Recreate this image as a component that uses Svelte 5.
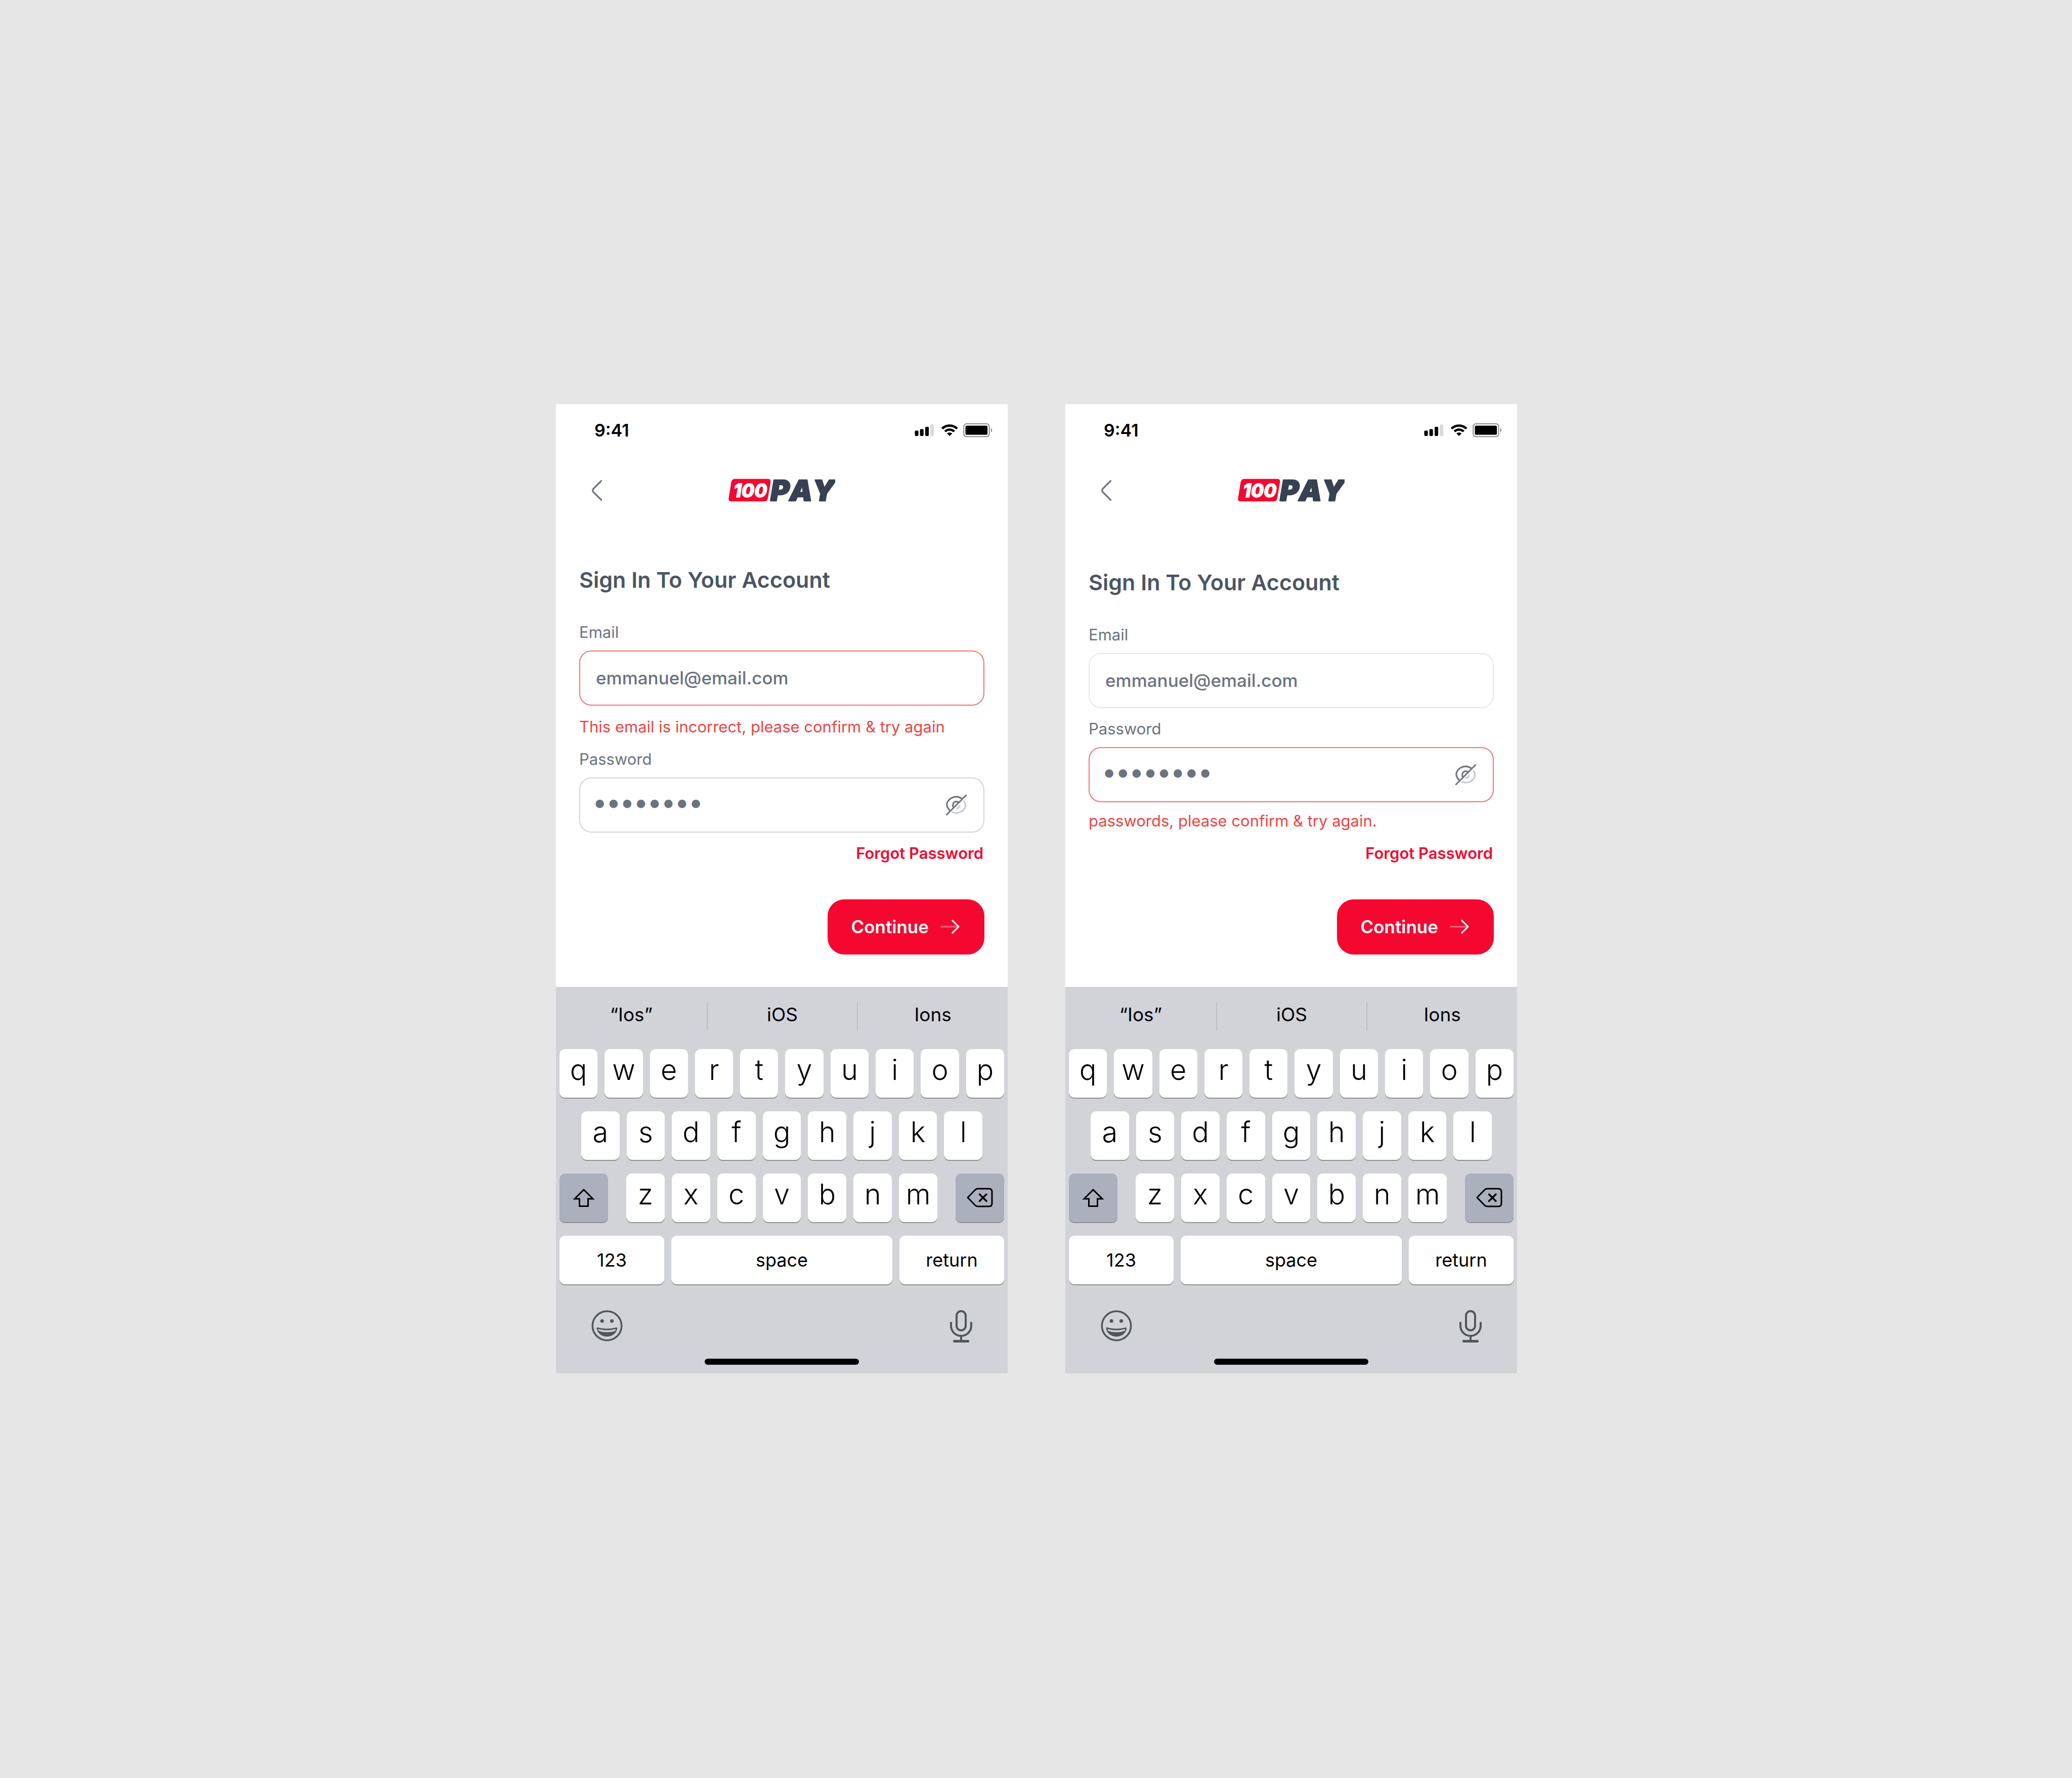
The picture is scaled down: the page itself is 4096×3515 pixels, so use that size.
<script>
  const screens = [
    {
      id: 'email-error',
      emailState: 'error',
      emailError: 'This email is incorrect, please confirm & try again',
      passwordState: 'normal',
      passwordError: ''
    },
    {
      id: 'password-error',
      emailState: 'muted',
      emailError: '',
      passwordState: 'error',
      passwordError: 'passwords, please confirm & try again.'
    }
  ];
  const suggestions = ['“Ios”', 'iOS', 'Ions'];
  const top = [...'qwertyuiop'];
  const middle = [...'asdfghjkl'];
  const bottom = [...'zxcvbnm'];
</script>

<main class="stage">
  {#each screens as screen (screen.id)}
    <section class="phone">
      <div class="status">
        <time>9:41</time>
        <svg class="status-icons" viewBox="94 69 608 114" aria-hidden="true">
          <rect x="96" y="129" width="28" height="42" rx="8" />
          <rect x="136" y="117" width="28" height="54" rx="8" />
          <rect x="177" y="99" width="28" height="72" rx="8" />
          <rect x="217" y="81" width="28" height="90" rx="8" fill="#dadada" />
          <path d="M303 107Q330 81 367 81T432 107L420 120Q396 99 367 99T315 120Z" />
          <path d="M325 130Q343 112 367 112T410 130L397 142Q384 130 367 130T338 142Z" />
          <path d="M347 152Q356 144 367 144T388 152L367 171Z" />
          <rect x="478" y="76" width="199" height="100" rx="22" fill="none" stroke="#8a8a8e" stroke-width="8" />
          <rect x="491" y="90" width="172" height="72" rx="10" />
          <path d="M690 108Q699 112 699 126T690 144Z" fill="#8a8a8e" />
        </svg>
      </div>

      <header class="header">
        <button class="back" aria-label="Back">
          <svg viewBox="0 0 24 24" aria-hidden="true">
            <path d="M15 19.92L8.48 13.4c-.77-.77-.77-2.03 0-2.8L15 4.08" fill="none" stroke="#6b7280" stroke-width="1.4" stroke-linecap="round" />
          </svg>
        </button>
        <svg class="logo" viewBox="116 22 836 301" role="img" aria-label="100PAY">
          <path d="M166 84H424Q450 84 446 110L425 235Q420 261 395 261H138Q114 261 118 235L138 110Q143 84 166 84Z" fill="#f5082f" />
          <text class="logo-num" x="156" y="228">100</text>
          <text class="logo-name" x="446" y="255">PAY</text>
        </svg>
      </header>

      <form class="form" class:compact={screen.passwordError} onsubmit={(e) => e.preventDefault()}>
        <h1>Sign In To Your Account</h1>

        <label for="{screen.id}-email">Email</label>
        <div class="control {screen.emailState}">
          <input id="{screen.id}-email" type="email" value="emmanuel@email.com" />
        </div>
        {#if screen.emailError}<p class="error-text">{screen.emailError}</p>{/if}

        <label class="next" for="{screen.id}-password">Password</label>
        <div class="control {screen.passwordState}">
          <input id="{screen.id}-password" class="secret" type="password" value="password" />
          <button class="eye" type="button" aria-label="Show password">
            <svg viewBox="75 86 170 170" fill="none" stroke="#6b7280" stroke-width="12" stroke-linecap="round" aria-hidden="true">
              <path d="M205 122C165 92 112 108 91 147C80 168 87 189 108 213" />
              <path d="M178 151C161 136 135 146 133 171C132 180 134 184 138 189" />
              <path d="M236 95L84 247" />
              <g stroke="#c4c7cd">
                <path d="M219 140C233 158 236 174 227 193C210 226 170 242 131 228" />
                <path d="M186 176Q182 194 164 198" />
              </g>
            </svg>
          </button>
        </div>
        {#if screen.passwordError}<p class="error-text">{screen.passwordError}</p>{/if}

        <a class="forgot" class:after-error={screen.passwordError} href="#forgot">Forgot Password</a>

        <button class="continue" type="submit">
          <span>Continue</span>
          <svg viewBox="0 0 24 24" fill="none" stroke="#fff" stroke-width="1.5" stroke-linecap="round" stroke-linejoin="round" aria-hidden="true">
            <path d="M3.5 12h16.83" opacity=".4" />
            <path d="M14.43 5.93L20.5 12l-6.07 6.07" />
          </svg>
        </button>
      </form>

      <div class="keyboard">
        <div class="suggestions">
          {#each suggestions as word}<button>{word}</button>{/each}
        </div>
        <div class="keys">
          <div class="row">
            {#each top as k}<button class="key">{k}</button>{/each}
          </div>
          <div class="row inset">
            {#each middle as k}<button class="key">{k}</button>{/each}
          </div>
          <div class="row split">
            <button class="key special" aria-label="Shift">
              <svg width="44" height="38" viewBox="0 0 44 38" aria-hidden="true">
                <path d="M22 3L40 21H30.500V35.500H13.500V21H4Z" fill="none" stroke="#000" stroke-width="3" />
              </svg>
            </button>
            <div class="row letters">
              {#each bottom as k}<button class="key">{k}</button>{/each}
            </div>
            <button class="key special" aria-label="Delete">
              <svg width="52" height="39" viewBox="0 0 52 39" fill="none" stroke="#000" stroke-width="3" stroke-linecap="round" stroke-linejoin="round" aria-hidden="true">
                <path d="M2 19.500L17 4Q19 2 22 2H44Q50 2 50 8V31Q50 37 44 37H22Q19 37 17 35Z" />
                <path d="M25.500 13L39 26.500M39 13L25.500 26.500" stroke-width="3.500" />
              </svg>
            </button>
          </div>
          <div class="row actions">
            <button class="key word">123</button>
            <button class="key word">space</button>
            <button class="key word">return</button>
          </div>
        </div>
        <div class="tools">
          <button aria-label="Emoji">
            <svg width="62" height="62" viewBox="125 100 246 246" fill="#50565b" aria-hidden="true">
              <circle cx="248" cy="223" r="114" fill="none" stroke="#50565b" stroke-width="14" />
              <circle cx="209" cy="185" r="14" />
              <circle cx="286" cy="185" r="14" />
              <path fill-rule="evenodd" d="M167 244C165 235 172 234 180 237C220 249 275 249 316 237C324 234 330 236 328 245C322 282 290 308 248 308S173 282 167 244ZM182 249C220 261 275 261 312 249C317 248 317 256 313 262C285 277 210 277 183 262C178 255 178 248 182 249Z" />
            </svg>
          </button>
          <button aria-label="Dictate">
            <svg width="44" height="64" viewBox="0 0 44 64" fill="none" stroke="#50565b" stroke-width="4" stroke-linecap="round" aria-hidden="true">
              <rect x="13" y="2" width="18" height="38" rx="9" />
              <path d="M2 25V31A20 20 0 0 0 42 31V25M22 52V60" />
              <rect x="6" y="59" width="32" height="5" rx="2" fill="#50565b" stroke="none" />
            </svg>
          </button>
        </div>
        <div class="home"></div>
      </div>
    </section>
  {/each}
</main>

<style>
  :global(body) {
    margin: 0;
    background: #e6e6e6;
  }
  .stage {
    box-sizing: border-box;
    min-height: 100vh;
    padding: 0 0 2px 2px;
    display: flex;
    justify-content: center;
    align-content: center;
    flex-wrap: wrap;
    gap: 114px;
    font-family: Inter, 'Liberation Sans', sans-serif;
  }
  button {
    border: 0;
    padding: 0;
    margin: 0;
    background: none;
    font: inherit;
    color: inherit;
    cursor: pointer;
  }
  svg {
    display: block;
  }
  .phone {
    flex: 0 1 893px;
    display: flex;
    flex-direction: column;
    background: #fff;
  }
  .status {
    height: 104px;
    padding: 0 30px 0 76px;
    display: flex;
    align-items: center;
    justify-content: space-between;
    font-size: 34px;
    font-weight: 600;
    color: #000;
  }
  .status-icons {
    width: 154px;
    height: 29px;
  }
  .header {
    height: 133px;
    padding: 0 54px;
    display: grid;
    grid-template-columns: 1fr auto 1fr;
    align-items: center;
  }
  .back svg {
    width: 57px;
    height: 57px;
  }
  .logo {
    width: 211px;
    height: 76px;
  }
  .logo text {
    font-family: Inter, sans-serif;
    font-style: italic;
    stroke-linejoin: round;
  }
  .logo-num {
    font-size: 144px;
    font-weight: 800;
    fill: #fff;
    stroke: #fff;
    stroke-width: 6px;
  }
  .logo-name {
    font-size: 226px;
    font-weight: 900;
    font-kerning: none;
    fill: #384152;
    stroke: #384152;
    stroke-width: 10px;
  }
  .form {
    flex: 1;
    padding: 80px 46px 64px;
    display: flex;
    flex-direction: column;
    justify-content: flex-end;
  }
  h1 {
    margin: 0 0 54px;
    font-size: 43px;
    line-height: 60px;
    font-weight: 600;
    color: #4b5563;
  }
  label {
    margin-bottom: 16px;
    font-size: 31px;
    line-height: 40px;
    font-weight: 400;
    color: #6b7280;
  }
  .next {
    margin-top: 24px;
  }
  .compact .next {
    margin-top: 21px;
  }
  .control {
    box-sizing: border-box;
    height: 109px;
    padding-right: 32px;
    display: flex;
    align-items: center;
    border: 2px solid #d0d5dd;
    border-radius: 24px;
  }
  .control.muted {
    border-color: #e5e7eb;
  }
  .control.error {
    border-color: #f87171;
  }
  input {
    flex: 1;
    min-width: 0;
    padding: 0 0 0 31px;
    border: 0;
    outline: 0;
    background: none;
    font-family: inherit;
    font-size: 35px;
    font-weight: 500;
    color: #6b7280;
  }
  .secret {
    padding-left: 25px;
    font-family: 'DejaVu Sans', sans-serif;
    font-size: 46px;
    font-weight: 400;
    -webkit-text-stroke: 3px #6b7280;
  }
  .eye svg {
    width: 43px;
    height: 43px;
  }
  .error-text {
    margin: 22px 0 0;
    font-size: 31px;
    line-height: 40px;
    color: #ef4444;
  }
  .compact .error-text {
    margin-top: 17px;
  }
  .forgot {
    align-self: flex-end;
    margin: 21px 2px 71px 0;
    font-size: 31px;
    line-height: 40px;
    font-weight: 600;
    color: #f5082f;
    text-decoration: none;
  }
  .forgot.after-error {
    margin-top: 24px;
  }
  .continue {
    align-self: flex-end;
    height: 109px;
    padding: 0 44px 0 46px;
    display: flex;
    align-items: center;
    gap: 18px;
    border-radius: 33px;
    background: #f5082f;
    color: #fff;
    font-size: 35px;
    font-weight: 600;
  }
  .continue svg {
    width: 48px;
    height: 48px;
  }
  .keyboard {
    padding: 30px 0 17px;
    display: flex;
    flex-direction: column;
    background: #d1d3d9;
    color: #000;
  }
  .suggestions {
    display: grid;
    grid-template-columns: repeat(3, 1fr);
    margin-bottom: 36px;
  }
  .suggestions button {
    height: 57px;
    padding-bottom: 8px;
    font-size: 37px;
  }
  .suggestions button + button {
    border-left: 2px solid #bcbec4;
  }
  .keys {
    padding: 0 7px;
    display: grid;
    gap: 27px;
  }
  .row {
    display: flex;
    gap: 14px;
  }
  .inset {
    padding: 0 43px;
  }
  .split {
    gap: 36px;
  }
  .letters {
    flex: 1;
  }
  .key {
    flex: 1 1 0;
    min-width: 0;
    height: 96px;
    padding-bottom: 14px;
    border-radius: 11px;
    background: #fff;
    box-shadow: 0 2px 0 #8f9195;
    font-size: 56px;
    line-height: 68px;
    font-weight: 300;
  }
  .special {
    flex: 0 0 96px;
    display: flex;
    align-items: center;
    justify-content: center;
    padding: 0;
    background: #abb0bd;
  }
  .word {
    padding: 0;
    font-size: 36px;
    font-weight: 400;
  }
  .actions {
    display: grid;
    grid-template-columns: 207px 1fr 207px;
  }
  .tools {
    padding: 51px 70px 0;
    display: flex;
    align-items: flex-start;
    justify-content: space-between;
  }
  .home {
    align-self: center;
    width: 305px;
    height: 12px;
    margin-top: 32px;
    border-radius: 6px;
    background: #000;
  }
</style>
